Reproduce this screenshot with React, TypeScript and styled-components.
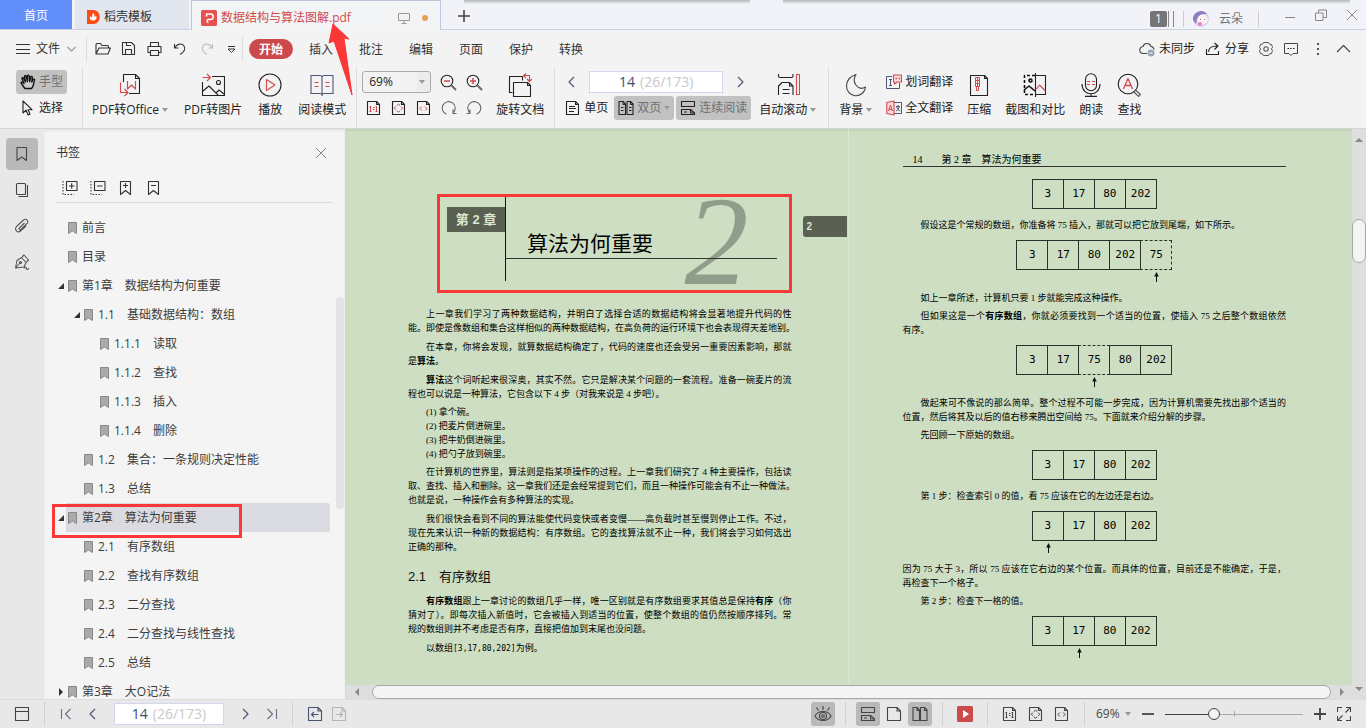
import React from "react";
import styled, { createGlobalStyle, css } from "styled-components";

const UI = `"Open Sans", "Noto Sans CJK SC", sans-serif`;
const BOOK = `"Liberation Serif", "Noto Sans CJK SC", serif`;
const RED = "#d04a4c";
const MARK = "#fb3838";
const PAPER = "#cddec2";

const Global = createGlobalStyle`
  * { box-sizing: border-box; }
  body { margin: 0; font: 12px/16px ${UI}; color: #333; background: #f3f3f3; }
  button, input, select { font: inherit; color: inherit; margin: 0; padding: 0; border: 0; background: none; }
  h1, h2, p, ol, ul, figure { margin: 0; padding: 0; font-weight: 400; }
  ol, ul { list-style: none; }
`;

/* ---------- shell ---------- */
const Shell = styled.div`
  position: relative;
  display: flex;
  flex-direction: column;
  height: 100vh;
  overflow: hidden;
`;
const Svg = styled.svg`
  display: block;
  flex: none;
  fill: none;
  stroke: currentColor;
  stroke-width: 1.1;
  stroke-linejoin: round;
`;
type IconProps = { w?: number; h?: number; children: React.ReactNode };
const Icon = ({ w = 16, h = 16, children }: IconProps) => (
  <Svg width={w} height={h} viewBox={`0 0 ${w} ${h}`} aria-hidden="true">{children}</Svg>
);
const Caret = () => (
  <Icon w={6} h={4}><path d="M0 0h6L3 4z" fill="#999" stroke="none" /></Icon>
);

/* ---------- tab bar ---------- */
const TabBar = styled.header`
  position: relative;
  display: flex;
  flex: none;
  height: 30px;
  background: #f1f3f8;
  border-bottom: 1px solid #ccd2e4;
`;
const WindowShade = styled.div<{ $left: number; $right: number }>`
  position: absolute;
  top: 0;
  left: ${p => p.$left}px;
  right: ${p => p.$right}px;
  height: 4px;
  background: linear-gradient(#b4b6ba, #f1f3f8);
`;
const HomeTab = styled.button`
  width: 72px;
  height: 29px;
  padding-top: 2px;
  background: #628ffa;
  color: #fff;
`;
const TemplateTab = styled.button`
  display: flex;
  align-items: center;
  gap: 4px;
  width: 114px;
  height: 29px;
  margin: 0 3px;
  padding: 4px 0 0 11px;
  background: #e2e6ef;
`;
const FileTab = styled.button`
  display: flex;
  align-items: center;
  width: 250px;
  height: 30px;
  margin-left: -1px;
  padding: 4px 12px 0 9px;
  background: #f3f4f5;
  border: 1px solid #bec7dd;
  border-bottom: 0;
  color: ${RED};
`;
const FileName = styled.span`
  margin: 0 auto 0 4px;
`;
const Unsaved = styled.span`
  width: 6px;
  height: 6px;
  margin-left: 12px;
  border-radius: 50%;
  background: #e6a057;
`;
const Plain = styled.button`
  display: flex;
  align-items: center;
  justify-content: center;
`;
const NewTab = styled(Plain)`
  width: 46px;
  padding-top: 3px;
`;
const WindowArea = styled.div`
  display: flex;
  align-items: center;
  margin-left: auto;
  padding: 8px 8px 0 0;
  color: #777;
`;
const Count = styled.span`
  display: flex;
  align-items: center;
  gap: 1px;
  padding-right: 9px;
  border-right: 1px solid #ccc;
  &::after {
    content: "";
    width: 4px;
    height: 16px;
    border: solid #888;
    border-width: 0 1px;
  }
`;
const CountBox = styled.b`
  width: 17px;
  height: 16px;
  border-radius: 2px;
  background: #757575;
  color: #fff;
  font-weight: 400;
  text-align: center;
`;
const User = styled.button`
  display: flex;
  align-items: center;
  gap: 10px;
  padding: 0 15px 0 9px;
  border-right: 1px solid #ccc;
`;
const WinButtons = styled.div`
  display: flex;
  gap: 19px;
  padding-left: 25px;
  margin-top: -8px;
  color: #888;
`;

/* ---------- menu bar ---------- */
const MenuBar = styled.nav`
  display: flex;
  flex: none;
  align-items: center;
  height: 38px;
  padding: 0 15px 0 16px;
`;
const FileMenu = styled.button`
  display: flex;
  align-items: center;
  gap: 6px;
`;
const QuickBar = styled.div`
  display: flex;
  align-items: center;
  gap: 10px;
  height: 24px;
  margin-left: 9px;
  padding: 0 3px 0 8px;
  border: solid #ddd;
  border-width: 0 1px;
`;
const MenuTab = styled.button<{ $on?: boolean }>`
  width: 44px;
  height: 20px;
  margin: 0 3px;
  padding-top: 1px;
  border-radius: 10px;
  ${p => p.$on && css`
    background: #cd4a4c;
    color: #fff;
    font-weight: 700;
  `}
`;
const MenuRight = styled.div`
  display: flex;
  align-items: center;
  gap: 10px;
  margin-left: auto;
  color: #222;
`;
const IconText = styled.button`
  display: flex;
  align-items: center;
  gap: 4px;
`;

/* ---------- ribbon ---------- */
const Ribbon = styled.div`
  display: flex;
  flex: none;
  height: 61px;
  background: #f3f3f3;
  border-bottom: 1px solid #d4d6d3;
  color: #222;
`;
const Group = styled.div<{ $gap: number; $pad?: string }>`
  display: flex;
  gap: ${p => p.$gap}px;
  padding: ${p => p.$pad ?? "0 10px"};
  & + & { border-left: 1px solid #ddd; }
`;
const Rows = styled.div`
  display: flex;
  flex-direction: column;
  gap: 2px;
  padding-top: 2px;
`;
const Row = styled.div<{ $gap?: number; $pad?: string }>`
  display: flex;
  align-items: center;
  height: 24px;
  gap: ${p => p.$gap ?? 0}px;
  padding: ${p => p.$pad ?? "0"};
`;
const SmallTool = styled.button<{ $on?: boolean }>`
  display: flex;
  align-items: center;
  gap: 3px;
  height: 24px;
  padding: 0 4px;
  border-radius: 3px;
  white-space: nowrap;
  ${p => p.$on && css`
    background: #c1c1c1;
    color: #707070;
    svg { color: #222; }
  `}
`;
const BigTool = styled.button`
  display: flex;
  flex-direction: column;
  align-items: center;
  gap: 5px;
  padding-top: 5px;
  height: 52px;
  white-space: nowrap;
`;
const ToolLabel = styled.span`
  display: flex;
  align-items: center;
  gap: 3px;
`;
const SideTools = styled.div`
  display: flex;
  gap: 14px;
`;
const SelectWrap = styled.label<{ $boxed?: boolean }>`
  display: flex;
  align-items: center;
  gap: 4px;
  select { appearance: none; outline: 0; width: 25px; }
  ${p => p.$boxed && css`
    width: 69px;
    height: 22px;
    padding: 0 5px 0 6px;
    border: 1px solid #aaa;
    border-radius: 3px;
    box-shadow: inset -13px 0 #ececec;
    select { flex: 1; }
  `}
`;
const PageBox = styled.label<{ $w: number }>`
  display: flex;
  align-items: center;
  justify-content: center;
  gap: 4px;
  width: ${p => p.$w}px;
  height: 22px;
  background: #fff;
  border: 1px solid #d0d8ea;
  color: #c8c8c8;
  font-size: 14px;
  input { width: 17px; color: #3c4a70; outline: 0; }
`;
const PageInput = ({ w }: { w: number }) => (
  <PageBox $w={w}>
    <input defaultValue="14" aria-label="页码" />
    <span>(26/173)</span>
  </PageBox>
);
const ZoomSelect = ({ boxed }: { boxed?: boolean }) => (
  <SelectWrap $boxed={boxed}>
    <select aria-label="缩放比例" defaultValue="69%"><option>69%</option><option>100%</option></select>
    <Caret />
  </SelectWrap>
);

/* ---------- body ---------- */
const Body = styled.div`
  display: flex;
  flex: 1;
  min-height: 0;
`;
const Rail = styled.nav`
  display: flex;
  flex: none;
  flex-direction: column;
  gap: 4px;
  width: 44px;
  padding: 9px 6px;
  background: #e8e8e8;
  color: #444;
`;
const RailButton = styled(Plain)<{ $on?: boolean }>`
  width: 32px;
  height: 32px;
  border-radius: 4px;
  background: ${p => (p.$on ? "#b9b9b9" : "transparent")};
`;
const Panel = styled.aside`
  display: flex;
  flex: none;
  flex-direction: column;
  width: 302px;
  background: #f4f4f4;
  border-right: 1px solid #d4d6dc;
  box-shadow: inset 0 2px 2px #e4e4e4;
`;
const PanelHead = styled.div`
  display: flex;
  align-items: center;
  justify-content: space-between;
  height: 48px;
  padding: 0 18px 0 12px;
`;
const PanelTools = styled.div`
  display: flex;
  align-items: center;
  gap: 12px;
  height: 26px;
  margin: 0 12px;
  padding: 0 0 4px 6px;
  border-bottom: 1px solid #dcdcdc;
`;
const TreeArea = styled.div`
  display: flex;
  flex: 1;
  min-height: 0;
  padding-top: 10px;
  overflow: hidden;
`;
const Tree = styled.ul`
  flex: 1;
`;
const TreeScroll = styled.div`
  width: 8px;
  height: 212px;
  margin: 84px 1px 0 6px;
  border-radius: 4px;
  background: #e2e3e7;
`;
const TreeRow = styled.li<{ $level: number; $on?: boolean }>`
  position: relative;
  display: flex;
  align-items: center;
  height: 29px;
  padding-left: ${p => 14 + p.$level * 16}px;
  background: ${p => (p.$on ? "linear-gradient(to right, transparent 22px, #dadbe0 22px)" : "none")};
  border-radius: 2px;
`;
const Twist = styled.span`
  width: 10px;
`;
const TreeLink = styled.a`
  display: flex;
  align-items: center;
  gap: 5px;
  color: #3c3c3c;
  text-decoration: none;
  white-space: pre;
`;
const RowMark = styled.div`
  position: absolute;
  top: 1px;
  left: 8px;
  width: 190px;
  height: 34px;
  border: 3px solid ${MARK};
`;

/* ---------- document ---------- */
const Doc = styled.main`
  display: flex;
  flex: 1;
  flex-direction: column;
  min-width: 0;
`;
const Spread = styled.div`
  display: flex;
  flex: 1;
  min-height: 0;
  padding-right: 4px;
  overflow: hidden;
  background: ${PAPER};
  box-shadow: inset 0 2px 1px #c3d3b8;
  color: #000;
  font: 9px/14px ${BOOK};
`;
const Page = styled.article<{ $pad: string; $gap: number }>`
  position: relative;
  display: flex;
  flex: 1 1 0;
  flex-direction: column;
  min-width: 0;
  padding: ${p => p.$pad};
  --gap: ${p => p.$gap}px;
  & + & { border-left: 1px solid #d9e6d0; }
`;
const Para = styled.p<{ $flush?: boolean }>`
  margin-top: var(--gap);
  text-indent: ${p => (p.$flush ? 0 : 18)}px;
`;
const Line = styled.span<{ $full: boolean }>`
  display: block;
  white-space: nowrap;
  text-align: justify;
  text-align-last: ${p => (p.$full ? "justify" : "left")};
  & + & { text-indent: 0; }
`;
const Text = ({ lines, flush }: { lines: React.ReactNode[]; flush?: boolean }) => (
  <Para $flush={flush}>
    {lines.map((l, i) => <Line key={i} $full={i < lines.length - 1}>{l}</Line>)}
  </Para>
);
const Steps = styled.ol`
  margin: 4px 0 -1px;
  padding-left: 18px;
`;
const Code = styled.code`
  font: 8px/12px "DejaVu Sans Mono", monospace;
`;
const ChapterHead = styled.header`
  position: relative;
  display: flex;
  align-items: flex-start;
  flex: none;
  height: 98px;
  margin: 0 0 9px 29px;
  padding: 0 15px 0 10px;
`;
const ChapterNo = styled.span`
  width: 58px;
  height: 25px;
  margin-top: 12px;
  background: #5a6153;
  color: #dbe8d2;
  font: 700 13px/25px "Liberation Sans", "Noto Sans CJK SC", sans-serif;
  text-align: center;
`;
const ChapterRule = styled.div`
  position: relative;
  flex: 1;
  height: 86px;
  border-left: 1px solid #111;
`;
const ChapterTitle = styled.h1`
  padding: 31px 0 0 21px;
  border-bottom: 1px solid #333;
  color: #000;
  font: 21px/32px "Noto Sans CJK SC", sans-serif;
`;
const BigDigit = styled.span`
  position: absolute;
  top: -18px;
  right: 43px;
  color: #909d8a;
  font: italic 128px/128px "Liberation Serif", serif;
`;
const HeadMark = styled.div`
  position: absolute;
  inset: -1px 0 0;
  border: 3px solid ${MARK};
`;
const SideTab = styled.span`
  position: absolute;
  top: 87px;
  right: 1px;
  width: 44px;
  height: 21px;
  padding-left: 4px;
  border-radius: 3px 0 0 3px;
  background: #5a6153;
  color: #dbe8d2;
  font: 700 10px/22px "Liberation Sans", sans-serif;
`;
const Section = styled.h2`
  margin: 13px 0 2px;
  color: #111;
  font: 13px/20px "Liberation Sans", "Noto Sans CJK SC", sans-serif;
  white-space: pre;
`;
const RunningHead = styled.header`
  display: flex;
  margin-bottom: 4px;
  padding-left: 10px;
  border-bottom: 1px solid #333;
  font-size: 10px;
  line-height: 12px;
  white-space: pre;
`;
const FolioNo = styled.span`
  width: 29px;
`;
const Figure = styled.figure`
  align-self: center;
  margin: 8px 0 5px;
`;
const Cells = styled.div`
  display: flex;
  padding-left: 1px;
`;
const Cell = styled.span<{ $open?: boolean }>`
  width: 32px;
  height: 30px;
  margin-left: -1px;
  border: 1px ${p => (p.$open ? "dashed" : "solid")} #2c302a;
  font: 11px/28px "DejaVu Sans Mono", monospace;
  text-align: center;
`;
const Pointer = styled.div<{ $at: number }>`
  margin-top: 2px;
  padding-left: ${p => p.$at * 31 + 12}px;
`;
const ArrayFigure = ({ items, open, at }: { items: number[]; open?: number; at?: number }) => (
  <Figure>
    <Cells>{items.map((n, i) => <Cell key={i} $open={i === open}>{n}</Cell>)}</Cells>
    {at !== undefined && (
      <Pointer $at={at}>
        <Icon w={8} h={10}><path d="M4.500 2v8" stroke="#111" strokeWidth="1" /><path d="M4.500 0l2.300 4.500H2.200z" fill="#111" stroke="none" /></Icon>
      </Pointer>
    )}
  </Figure>
);

/* ---------- scroll bars ---------- */
const HScroll = styled.div`
  display: flex;
  flex: none;
  align-items: center;
  height: 14px;
  padding: 0 7px 0 8px;
  gap: 8px;
  background: #dedede;
`;
const HThumb = styled.div`
  flex: 1;
  height: 14px;
  margin-left: 4px;
  border: 1px solid #a8a8a8;
  border-radius: 7px;
  background: #f4f4f4;
`;
const VScroll = styled.div`
  display: flex;
  flex: none;
  flex-direction: column;
  align-items: center;
  width: 14px;
  padding: 9px 0 8px;
  background: #dedede;
`;
const VThumb = styled.div`
  width: 14px;
  height: 44px;
  margin: 77px 0 auto;
  border: 1px solid #a8a8a8;
  border-radius: 7px;
  background: #f4f4f4;
`;

/* ---------- status bar ---------- */
const Status = styled.footer`
  display: flex;
  flex: none;
  align-items: center;
  height: 29px;
  background: #e8e8e8;
  border-top: 1px solid #dcdcdc;
  color: #444;
`;
const Cluster = styled.div<{ $gap: number; $pad?: string }>`
  display: flex;
  align-items: center;
  height: 24px;
  gap: ${p => p.$gap}px;
  padding: ${p => p.$pad ?? "0 10px"};
  & + & { border-left: 1px solid #d2d2d2; }
`;
const StatusRight = styled.div`
  display: flex;
  margin-left: auto;
`;
const StatusButton = styled(Plain)<{ $on?: boolean }>`
  width: 24px;
  height: 24px;
  border-radius: 3px;
  background: ${p => (p.$on ? "#b9b9b9" : "transparent")};
`;
const SliderWrap = styled.div`
  position: relative;
  display: flex;
  width: 138px;
  &::after {
    content: "";
    position: absolute;
    left: 50%;
    top: 5px;
    width: 1px;
    height: 6px;
    background: #aaa;
  }
`;
const Slider = styled.input`
  appearance: none;
  width: 100%;
  height: 16px;
  &::-webkit-slider-runnable-track {
    height: 1px;
    background: linear-gradient(to right, #444 35%, #aaa 35%);
  }
  &::-webkit-slider-thumb {
    appearance: none;
    width: 12px;
    height: 12px;
    margin-top: -6px;
    border: 1px solid #444;
    border-radius: 50%;
    background: #f4f4f4;
  }
`;
const Callout = styled.svg`
  position: absolute;
  top: 24px;
  left: 328px;
  pointer-events: none;
`;

/* ---------- shared drawings ---------- */
const sheet = "M1.500 1.500h9l3 3v10h-12zM10.500 1.500v3h3";
const DoubleSheet = () => (
  <Icon><path d="M1 1.500h4l2.500 2.500v10.500H1zM9 1.500h3.500L15 4v10.500H9z" /><path d="M5 1.500v3h2.500M12.500 1.500v3H15M3 7.500h2.500M3 10.500h2.500M11 7.500h2.500M11 10.500h2.500" strokeWidth="1" /></Icon>
);
const FlowSheets = () => (
  <Icon><path d="M1.500 1.500v5h13v-5zM1.500 14.500v-5h9l4 3.500v1.500zM10.500 9.500v3.500h4" /><path d="M4 12h3" strokeWidth="1" /></Icon>
);
const ActualSize = ({ c }: { c?: string }) => (
  <Icon><path d={sheet} /><path d="M4.500 6v5M10.500 6v5M3.500 6.500h1M9.500 6.500h1M3.500 11.500h2M9.500 11.500h2M7 7.500h1.500M7 9.500h1.500" stroke={c} strokeWidth="1" /></Icon>
);
const FitPage = ({ c }: { c?: string }) => (
  <Icon><path d={sheet} /><path d="M5.800 5.500L7.500 4.300l1.700 1.200M5.800 10.900l1.700 1.200 1.700-1.200M4.700 6.600L3.400 8.200l1.300 1.600M10.300 6.600l1.300 1.600-1.300 1.600" stroke={c} strokeWidth="1" /></Icon>
);
const FitWidth = ({ c }: { c?: string }) => (
  <Icon><path d={sheet} /><path d="M5.800 6.500L4 8.500l1.800 2M9.200 6.500l1.800 2-1.800 2" stroke={c} strokeWidth="1" /></Icon>
);
const Chevron = ({ left }: { left?: boolean }) => (
  <Icon w={12} h={14}><path d={left ? "M8 2L3 7l5 5" : "M4 2l5 5-5 5"} stroke="#475373" /></Icon>
);

const tree: { level: number; text: string; twist?: "open" | "shut"; on?: boolean }[] = [
  { level: 0, text: "前言" },
  { level: 0, text: "目录" },
  { level: 0, text: "第1章　数据结构为何重要", twist: "open" },
  { level: 1, text: "1.1　基础数据结构：数组", twist: "open" },
  { level: 2, text: "1.1.1　读取" },
  { level: 2, text: "1.1.2　查找" },
  { level: 2, text: "1.1.3　插入" },
  { level: 2, text: "1.1.4　删除" },
  { level: 1, text: "1.2　集合：一条规则决定性能" },
  { level: 1, text: "1.3　总结" },
  { level: 0, text: "第2章　算法为何重要", twist: "open", on: true },
  { level: 1, text: "2.1　有序数组" },
  { level: 1, text: "2.2　查找有序数组" },
  { level: 1, text: "2.3　二分查找" },
  { level: 1, text: "2.4　二分查找与线性查找" },
  { level: 1, text: "2.5　总结" },
  { level: 0, text: "第3章　大O记法", twist: "shut" },
];

const TopTabs = () => (
  <TabBar>
    <WindowShade $left={464} $right={616} />
    <WindowShade $left={783} $right={16} />
    <HomeTab>首页</HomeTab>
    <TemplateTab>
      <Icon w={14}>
        <path d="M1 1h6c9 0 9 14 0 14H1z" fill="#fb4b16" stroke="none" />
        <path d="M7 4c2.500 2 1 3.500 2 4l1-1.500c1.500 3-.5 5-3 5S2.500 9 4.500 7c.5 1 .5 1.500 1 1.500C6.500 7 6 5.500 7 4z" fill="#fff" stroke="none" />
      </Icon>
      稻壳模板
    </TemplateTab>
    <FileTab>
      <Icon>
        <rect width="16" height="16" rx="1.500" fill="#e8504f" stroke="none" />
        <path d="M5.500 6.500V4h4a2.700 2.700 0 0 1 0 5.400H7.500a1.500 1.500 0 1 0 0 3" stroke="#fff" strokeWidth="1.500" />
      </Icon>
      <FileName>数据结构与算法图解.pdf</FileName>
      <Icon w={12} h={12}><path d="M.5 1.500h11v7H.500zM6 8.500v3M3.500 11.500h5" stroke="#999" strokeWidth="1" /></Icon>
      <Unsaved />
    </FileTab>
    <NewTab aria-label="新建标签"><Icon w={12} h={12}><path d="M6 0v12M0 6h12" stroke="#444" strokeWidth="1.600" /></Icon></NewTab>
    <WindowArea>
      <Count><CountBox>1</CountBox></Count>
      <User>
        <Icon>
          <circle cx="8" cy="8" r="8" fill="#dcd3ee" stroke="none" />
          <path d="M0 9A8 8 0 0 1 14 3C9 3 4 4 3 13z" fill="#8d7cc0" stroke="none" />
          <circle cx="9.500" cy="8.500" r="5" fill="#fdf6f3" stroke="none" />
          <path d="M7 8.500h1M11 8.500h1" stroke="#87729c" />
          <circle cx="7" cy="13" r="2" fill="#e87ccc" stroke="none" />
        </Icon>
        云朵
      </User>
      <WinButtons>
        <Plain aria-label="最小化"><Icon w={12} h={12}><path d="M1 8.500h10" strokeWidth="1" /></Icon></Plain>
        <Plain aria-label="还原"><Icon w={12} h={12}><path d="M.5 4h7.500v7.500H.500zM3.500 4V1h8v7.500H8" strokeWidth="1" /></Icon></Plain>
        <Plain aria-label="关闭"><Icon w={12} h={12}><path d="M1 1l10 10M11 1L1 11" strokeWidth="1" /></Icon></Plain>
      </WinButtons>
    </WindowArea>
  </TabBar>
);

const Menu = () => (
  <MenuBar>
    <FileMenu>
      <Icon w={14} h={12}><path d="M0 1.500h14M0 6.500h14M0 10.500h14" strokeWidth="1" /></Icon>
      文件
      <Icon w={11} h={8}><path d="M1.500 2l4 4 4-4" stroke="#999" /></Icon>
    </FileMenu>
    <QuickBar>
      <Plain aria-label="打开"><Icon><path d="M1 13V3.500q0-1 1-1h3.500L7 4.500h5.500q1 0 1 1V7M1 13L4 7h11.500L13 13z" /></Icon></Plain>
      <Plain aria-label="保存"><Icon><path d="M1.500 1.500h9l3 3v9h-12zM4.500 13.500v-5h6v5M5.500 1.500v3H10" /></Icon></Plain>
      <Plain aria-label="打印"><Icon><path d="M3.500 5.500v-4h8v4M3.500 11.500h-2.500v-6h13v6h-2.500M3.500 9.500h8v5h-8z" /></Icon></Plain>
      <Plain aria-label="撤销"><Icon><path d="M1.500 3v4h4M2 6.500C4 2.500 9 2 11 5s0 6-4 8.500" /></Icon></Plain>
      <Plain aria-label="重做"><Icon><path d="M13.500 3v4h-4M13 6.500C11 2.500 6 2 4 5s0 6 4 8.500" stroke="#bbb" /></Icon></Plain>
      <Plain aria-label="更多"><Icon w={14}><path d="M3 5.500h7M3 8l3.500 3.500L10 8z" strokeWidth="1" /></Icon></Plain>
    </QuickBar>
    <Row $pad="0 0 0 3px">
      {["开始", "插入", "批注", "编辑", "页面", "保护", "转换"].map((t, i) => <MenuTab key={t} $on={i === 0}>{t}</MenuTab>)}
    </Row>
    <MenuRight>
      <IconText>
        <Icon><path d="M8 12.500H4.500a3.500 3.500 0 0 1-.5-7C5 1.500 11 1.500 12 5.500a3.500 3.500 0 0 1 3 3" stroke="#444" /><circle cx="12" cy="12" r="3.500" fill="#97a2ba" stroke="none" /><path d="M10.500 12h3" stroke="#fff" /></Icon>
        未同步
      </IconText>
      <IconText>
        <Icon><path d="M1.500 8v5.500h12V10M3.500 11c0-4 3-6 8.500-6M9.500 2L13 5l-3.500 3.500" /></Icon>
        分享
      </IconText>
      <Plain aria-label="设置"><Icon w={14}><path d="M4.500 1.500h5l1 1.700 2 .2 1 3.100L12.300 8l1.200 1.500-1 3.100-2 .2-1 1.700h-5l-1-1.700-2-.2-1-3.100L1.700 8 .500 6.500l1-3.100 2-.2z" stroke="#555" strokeWidth="1" /><circle cx="7" cy="8" r="2.200" stroke="#555" /></Icon></Plain>
      <Plain aria-label="评论"><Icon><path d="M1.500 2.500h13v10H10L8 14.500l-2-2H1.500z" stroke="#444" strokeWidth="1" /><path d="M4.500 7.500h1.500M7.200 7.500h1.500M10 7.500h1.500" /></Icon></Plain>
      <Plain aria-label="更多"><Icon><path d="M8 2h2v2H8zM8 7h2v2H8zM8 12h2v2H8z" fill="#555" stroke="none" /></Icon></Plain>
      <Plain aria-label="收起"><Icon><path d="M2 11l6.500-6.500L15 11" stroke="#444" /></Icon></Plain>
    </MenuRight>
  </MenuBar>
);

const Big = ({ label, caret, children }: { label: string; caret?: boolean; children: React.ReactNode }) => (
  <BigTool>
    <Icon w={24} h={24}>{children}</Icon>
    <ToolLabel>{label}{caret && <Caret />}</ToolLabel>
  </BigTool>
);

const Tools = () => (
  <Ribbon>
    <Group $gap={0} $pad="0 15px 0 16px">
      <Rows>
        <SmallTool $on>
          <Icon><path d="M5 14.500C3 12 1.500 10 1 8.500c1-1 2 0 3 1L2 4.500c0-1.200 1.300-1.200 1.700 0L5.500 8 4.500 2.500C4.700 1.200 6 1.300 6.300 2.500L7.500 7.500 7.500 2c.3-1.200 1.600-1 1.700 0l.5 5.500 1-4.500c.6-1 1.700-.6 1.600.5L11.800 8l1.200-2.500c.8-.8 1.800-.2 1.500.8C13.500 9 14 12 11.500 14.500z" fill="#ccc" stroke="#111" strokeWidth="1.400" /></Icon>
          手型
        </SmallTool>
        <SmallTool>
          <Icon><path d="M3 1v12l3-2.800L8 15l2-.8-2-4.500h4z" /></Icon>
          选择
        </SmallTool>
      </Rows>
    </Group>
    <Group $gap={16} $pad="0 10px 0 9px">
      <Big label="PDF转Office" caret>
        <path d="M5.500 9V1.500h12l4 4v15H11M17.500 1.500v4h4" /><path d="M9.500 8v8l4-4 4 4V8M2.500 9.500v10h7M6.500 16l3.500 3.500L6.500 23" stroke={RED} />
      </Big>
      <Big label="PDF转图片">
        <path d="M1.500 9v13.500h22v-19H11M2 18l6-5 9 9M15 20l3-3 5 4" /><circle cx="17.500" cy="9.500" r="2" /><path d="M1.500 4.500H9M6 1l3.500 3.500L6 8" stroke={RED} />
      </Big>
      <Big label="播放">
        <circle cx="12" cy="12" r="11" /><path d="M8.500 6.500v11l8.500-5.500z" stroke={RED} />
      </Big>
      <Big label="阅读模式">
        <path d="M1 2.500h9q2 0 2 2 0-2 2-2h9v18h-9q-2 0-2 2 0-2-2-2H1zM12 4.500v17" stroke="#4c5878" /><path d="M4.500 9.500h4M4.500 13.500h4M15.500 9.500h4M15.500 13.500h4" stroke={RED} />
      </Big>
    </Group>
    <Group $gap={13} $pad="0 10px 0 5px">
      <Rows>
        <Row $gap={9}>
          <ZoomSelect boxed />
          <Plain aria-label="缩小"><Icon w={17} h={17}><circle cx="7" cy="7" r="5.800" /><path d="M11.500 11.500l4.500 4.500" stroke="#666" strokeWidth="2" /><path d="M4 7h6" stroke={RED} strokeWidth="1.500" /></Icon></Plain>
          <Plain aria-label="放大"><Icon w={17} h={17}><circle cx="7" cy="7" r="5.800" /><path d="M11.500 11.500l4.500 4.500" stroke="#666" strokeWidth="2" /><path d="M4 7h6M7 4v6" stroke={RED} strokeWidth="1.500" /></Icon></Plain>
        </Row>
        <Row $gap={9} $pad="0 0 0 4px">
          <Plain aria-label="实际大小"><ActualSize c={RED} /></Plain>
          <Plain aria-label="适合页面"><FitPage c={RED} /></Plain>
          <Plain aria-label="适合宽度"><FitWidth c={RED} /></Plain>
          <Plain aria-label="顺时针旋转"><Icon><path d="M5.500 14.200A6.500 6.500 0 1 1 12 13M12 9.500V13.500h3.500" stroke="#666" /></Icon></Plain>
          <Plain aria-label="逆时针旋转"><Icon><path d="M10.500 14.200A6.500 6.500 0 1 0 4 13M4 9.500V13.500H.500" stroke="#666" /></Icon></Plain>
        </Row>
      </Rows>
      <Big label="旋转文档">
        <path d="M4.500 19.500h-3v-16h13v4" /><path d="M5.500 9.500h14l3 3v11h-17zM19.500 9.500v3h3" /><path d="M16 2.500h5.500V8M18 .5L15.500 2.500 18 5M19 6l2.500 2.500L24 6" stroke={RED} />
      </Big>
    </Group>
    <Group $gap={8} $pad="0 12px 0 6px">
      <Rows>
        <Row $gap={11} $pad="0 0 0 5px">
          <Plain aria-label="上一页"><Chevron left /></Plain>
          <PageInput w={134} />
          <Plain aria-label="下一页"><Chevron /></Plain>
        </Row>
        <Row $gap={2}>
          <SmallTool><Icon><path d={sheet} /><path d="M4 6.500h6M4 8.500h7M4 11.500h5" strokeWidth="1" /></Icon>单页</SmallTool>
          <SmallTool $on><DoubleSheet />双页<Caret /></SmallTool>
          <SmallTool $on><FlowSheets />连续阅读</SmallTool>
        </Row>
      </Rows>
      <Big label="自动滚动" caret>
        <path d="M2.500 1v2q0 1.500 1.500 1.500h11.500q1.500 0 1.500-1.500V1M2.500 22v-9l3.500-3.500h7.500l3.500 3.500v9M13.500 9.500v3.500H17M6.500 16.500h7M6.500 20.500h7" /><path d="M20.500 1.500h3v20h-3z" stroke={RED} />
      </Big>
    </Group>
    <Group $gap={10}>
      <Big label="背景" caret>
        <path d="M12 1.500C7 3 2.500 7 2.500 12.500a9.500 9.500 0 0 0 19 1.500C14 18.500 7 9 12 1.500z" stroke="#444" />
      </Big>
      <Rows>
        <SmallTool>
          <Icon><path d="M6 2.500H.500v12h13V9M3 5.500h3M4.500 5.500v6M3 11.500h3" stroke="#4c5878" strokeWidth="1" /><path d="M7.500 1h8v7H11L8.500 10V8h-1z" stroke={RED} fill="#fbdcdc" /><path d="M9.500 4.500h1.500M12.500 4.500h1.500" stroke={RED} strokeWidth="1.500" /></Icon>
          划词翻译
        </SmallTool>
        <SmallTool>
          <Icon><path d="M8 2.500h7.500v11H8M10 6.500h4M12 5v1.500M10 11c2-1 3-2.500 3.200-4.500M10.800 7c.5 2 1.500 3 3.400 4" stroke="#4c5878" strokeWidth="1" /><path d="M.8 2.500L8 1v14L.8 13.500z" stroke={RED} fill="#fbdcdc" /><path d="M2.500 11l2-6 2 6M3 9.500h3" stroke={RED} strokeWidth="1" /></Icon>
          全文翻译
        </SmallTool>
      </Rows>
      <SideTools>
        <Big label="压缩">
          <path d="M3.500 2.500h14l3 3v17h-17zM17.500 2.500v3h3" /><path d="M8.500 4.500h4v9h-4zM10.500 4.500v9M8.500 7.500h4M8.500 10.500h4M9.500 13.500v4h2v-4" stroke={RED} strokeWidth="1" />
        </Big>
        <Big label="截图和对比">
          <path d="M12 2.500H1.500v19H12" strokeWidth="1.600" strokeDasharray="3 2" stroke="#111" /><path d="M12.500 0v24M12 2.500h10.500v19H12" /><path d="M1 17l5-4 6 5M9 7.500a1.500 1.500 0 1 0 0 .1" stroke="#111" strokeWidth="1.600" /><path d="M12.500 17l4-5 6 6" stroke={RED} />
        </Big>
        <Big label="朗读">
          <rect x="6.500" y=".8" width="11" height="17" rx="5.500" /><path d="M3 11c0 13 18 13 18 0M12 21v2.500M6 23.400h12" /><path d="M8 8.500h3M13 8.500h3M8 11.500h3M13 11.500h3" stroke={RED} />
        </Big>
        <Big label="查找">
          <circle cx="11" cy="11" r="9.800" /><path d="M18.500 17l5 4.500-1.800 2L17 19" stroke="#555" /><path d="M6.500 16L11 5.500 15.500 16M8 12.500h6" stroke={RED} strokeWidth="1.300" />
        </Big>
      </SideTools>
    </Group>
  </Ribbon>
);

const Bookmarks = () => (
  <Panel>
    <PanelHead>
      <span>书签</span>
      <Plain aria-label="关闭书签"><Icon w={12} h={12}><path d="M1 1l10 10M11 1L1 11" stroke="#888" strokeWidth="1" /></Icon></Plain>
    </PanelHead>
    <PanelTools>
      <Plain aria-label="全部展开"><Icon><path d="M4.500 1.500h10.500v9H4.500zM7 6h5.500M9.700 3.300v5.400" /><path d="M1 1v13.500h11" strokeDasharray="1.500 1.500" /></Icon></Plain>
      <Plain aria-label="全部折叠"><Icon><path d="M4.500 1.500h10.500v9H4.500zM7 6h5.500" /><path d="M1 1v13.500h11" strokeDasharray="1.500 1.500" /></Icon></Plain>
      <Plain aria-label="添加书签"><Icon><path d="M2.500 1.500h10v13l-5-4-5 4zM5 5.500h5M7.500 3v5" /></Icon></Plain>
      <Plain aria-label="删除书签"><Icon><path d="M2.500 1.500h10v13l-5-4-5 4zM5 5.500h5" /></Icon></Plain>
    </PanelTools>
    <TreeArea>
      <Tree>
        {tree.map(r => (
          <TreeRow key={r.text} $level={r.level} $on={r.on}>
            <Twist>
              {r.twist && <Icon w={8} h={8}><path d={r.twist === "open" ? "M6 1v6H0z" : "M1 0v8l4-4z"} fill="#333" stroke="none" /></Icon>}
            </Twist>
            <TreeLink href="#">
              <Icon w={9} h={12}><path d="M.5.5h8v11l-4-2.500-4 2.500z" fill="#aaa" stroke="#888" strokeWidth="1" /></Icon>
              {r.text}
            </TreeLink>
            {r.on && <RowMark />}
          </TreeRow>
        ))}
      </Tree>
      <TreeScroll />
    </TreeArea>
  </Panel>
);

const LeftPage = () => (
  <Page $pad="66px 56px 0 62px" $gap={5}>
    <ChapterHead>
      <BigDigit>2</BigDigit>
      <ChapterNo>第 2 章</ChapterNo>
      <ChapterRule><ChapterTitle>算法为何重要</ChapterTitle></ChapterRule>
      <HeadMark />
    </ChapterHead>
    <SideTab>2</SideTab>
    <Text lines={["上一章我们学习了两种数据结构，并明白了选择合适的数据结构将会显著地提升代码的性", "能。即使是像数组和集合这样相似的两种数据结构，在高负荷的运行环境下也会表现得天差地别。"]} />
    <Text lines={["在本章，你将会发现，就算数据结构确定了，代码的速度也还会受另一重要因素影响，那就", <>是<b>算法</b>。</>]} />
    <Text lines={[<><b>算法</b>这个词听起来很深奥，其实不然。它只是解决某个问题的一套流程。准备一碗麦片的流</>, "程也可以说是一种算法，它包含以下 4 步（对我来说是 4 步吧）。"]} />
    <Steps>
      <li>(1) 拿个碗。</li>
      <li>(2) 把麦片倒进碗里。</li>
      <li>(3) 把牛奶倒进碗里。</li>
      <li>(4) 把勺子放到碗里。</li>
    </Steps>
    <Text lines={["在计算机的世界里，算法则是指某项操作的过程。上一章我们研究了 4 种主要操作，包括读", "取、查找、插入和删除。这一章我们还是会经常提到它们，而且一种操作可能会有不止一种做法。", "也就是说，一种操作会有多种算法的实现。"]} />
    <Text lines={["我们很快会看到不同的算法能使代码变快或者变慢——高负载时甚至慢到停止工作。不过，", "现在先来认识一种新的数据结构：有序数组。它的查找算法就不止一种，我们将会学习如何选出", "正确的那种。"]} />
    <Section>2.1　有序数组</Section>
    <Text lines={[<><b>有序数组</b>跟上一章讨论的数组几乎一样，唯一区别就是有序数组要求其值总是保持<b>有序</b>（你</>, "猜对了）。即每次插入新值时，它会被插入到适当的位置，使整个数组的值仍然按顺序排列。常", "规的数组则并不考虑是否有序，直接把值加到末尾也没问题。"]} />
    <Text lines={[<>以数组<Code>[3,17,80,202]</Code>为例。</>]} />
  </Page>
);

const RightPage = () => (
  <Page $pad="25px 62px 0 54px" $gap={4}>
    <RunningHead><FolioNo>14</FolioNo>第 2 章　算法为何重要</RunningHead>
    <ArrayFigure items={[3, 17, 80, 202]} />
    <Text lines={["假设这是个常规的数组，你准备将 75 插入，那就可以把它放到尾端，如下所示。"]} />
    <ArrayFigure items={[3, 17, 80, 202, 75]} open={4} at={4} />
    <Text lines={["如上一章所述，计算机只要 1 步就能完成这种操作。"]} />
    <Text lines={[<>但如果这是一个<b>有序数组</b>，你就必须要找到一个适当的位置，使插入 75 之后整个数组依然</>, "有序。"]} />
    <ArrayFigure items={[3, 17, 75, 80, 202]} open={2} at={2} />
    <Text lines={["做起来可不像说的那么简单。整个过程不可能一步完成，因为计算机需要先找出那个适当的", "位置，然后将其及以后的值右移来腾出空间给 75。下面就来介绍分解的步骤。"]} />
    <Text lines={["先回顾一下原始的数组。"]} />
    <ArrayFigure items={[3, 17, 80, 202]} />
    <Text lines={["第 1 步：检查索引 0 的值，看 75 应该在它的左边还是右边。"]} />
    <ArrayFigure items={[3, 17, 80, 202]} at={0} />
    <Text flush lines={["因为 75 大于 3，所以 75 应该在它右边的某个位置。而具体的位置，目前还是不能确定，于是，", "再检查下一个格子。"]} />
    <Text lines={["第 2 步：检查下一格的值。"]} />
    <ArrayFigure items={[3, 17, 80, 202]} at={1} />
  </Page>
);

const StatusBar = () => (
  <Status>
    <Cluster $gap={0} $pad="0 14px">
      <Plain aria-label="面板"><Icon><path d="M1.500 1.500h13v13h-13zM1.500 5.500h13" /></Icon></Plain>
    </Cluster>
    <Cluster $gap={15} $pad="0 14px 0 15px">
      <Plain aria-label="第一页"><Icon w={12} h={12}><path d="M1.500 1v10M10.500 1l-5 5 5 5" stroke="#6b7386" /></Icon></Plain>
      <Plain aria-label="上一页"><Chevron left /></Plain>
      <PageInput w={110} />
      <Plain aria-label="下一页"><Chevron /></Plain>
      <Plain aria-label="最后一页"><Icon w={12} h={12}><path d="M10.500 1v10M1.500 1l5 5-5 5" stroke="#6b7386" /></Icon></Plain>
    </Cluster>
    <Cluster $gap={8} $pad="0 14px">
      <Plain aria-label="后退"><Icon><path d="M1.500 1.500h9.500L14.500 5v9.500h-13zM11 1.500V5h3.500M11.500 8.500h-7M7 6L4.500 8.500 7 11" stroke="#475373" /></Icon></Plain>
      <Plain aria-label="前进"><Icon><path d="M1.500 1.500h9.500L14.500 5v9.500h-13zM11 1.500V5h3.500M4.500 8.500h7M9 6l2.500 2.500L9 11" stroke="#b5b5b5" /></Icon></Plain>
    </Cluster>
    <StatusRight>
      <Cluster $gap={0} $pad="0 10px 0 0">
        <StatusButton $on aria-label="护眼模式"><Icon w={18} h={18}><path d="M1 11c3-6 13-6 16 0-3 6-13 6-16 0z" /><circle cx="9" cy="11" r="3.500" /><circle cx="9" cy="11" r="1.300" /><path d="M9 1v4M2.500 2.500l2 3M15.500 2.500l-2 3" /></Icon></StatusButton>
      </Cluster>
      <Cluster $gap={2}>
        <StatusButton $on aria-label="连续阅读"><FlowSheets /></StatusButton>
        <StatusButton aria-label="单页"><Icon><path d="M1.500 1.500h9.500L14.500 5v9.500h-13zM11 1.500V5h3.500" /></Icon></StatusButton>
        <StatusButton $on aria-label="双页"><Icon><path d="M1 1.500h4l2.500 2.500v10.500H1zM8.500 1.500h4L15 4v10.500H8.500zM5 1.500v3h2.500M12.500 1.500v3H15" /></Icon></StatusButton>
      </Cluster>
      <Cluster $gap={2}>
        <StatusButton aria-label="播放"><Icon><rect width="16" height="16" rx="1.500" fill="#cd4a4c" stroke="none" /><path d="M6 4v8l6-4z" fill="#fff" stroke="none" /></Icon></StatusButton>
      </Cluster>
      <Cluster $gap={2}>
        <StatusButton aria-label="实际大小"><ActualSize /></StatusButton>
        <StatusButton aria-label="适合页面"><FitPage /></StatusButton>
        <StatusButton aria-label="适合宽度"><FitWidth /></StatusButton>
      </Cluster>
      <Cluster $gap={11} $pad="0 15px 0 11px">
        <ZoomSelect />
        <Plain aria-label="缩小"><Icon w={12} h={12}><path d="M0 6h12" strokeWidth="1.800" /></Icon></Plain>
        <SliderWrap><Slider type="range" min={0} max={100} defaultValue={34} aria-label="缩放" /></SliderWrap>
        <Plain aria-label="放大"><Icon w={12} h={12}><path d="M0 6h12M6 0v12" strokeWidth="1.800" /></Icon></Plain>
        <Plain aria-label="全屏"><Icon w={14} h={14}><path d="M.5 5V.500H5M9 .5h4.500V5M13.500 9v4.500H9M5 13.500H.500V9M13.500.5L8.500 5.500M.5 13.500l5-5" /></Icon></Plain>
      </Cluster>
    </StatusRight>
  </Status>
);

export default function App() {
  return (
    <Shell>
      <Global />
      <TopTabs />
      <Menu />
      <Tools />
      <Body>
        <Rail>
          <RailButton $on aria-label="书签"><Icon><path d="M3 1.500h9.500v13L7.700 11 3 14.500z" /></Icon></RailButton>
          <RailButton aria-label="缩略图"><Icon><rect x="2.500" y="1.500" width="9" height="11" rx="1" /><path d="M13.500 3v11.500H4.500" /></Icon></RailButton>
          <RailButton aria-label="附件"><Icon><path d="M10.500 5L5.500 10c-1 1 .3 2.500 1.500 1.500l6-6c2.500-2.500-1-5.500-3.500-3.500L2.500 8.500C0 11.500 3.500 15.500 6.500 13l5.500-5" stroke="#555" /></Icon></RailButton>
          <RailButton aria-label="签名"><Icon><path d="M1.500 14l1.500-7.500L7.500 3.500l4.500 5-2 4.500zM8 3l2-2 4.500 5-2 2M1.500 14l4-4.500M10 14.500c1-2 2-2 2.500 0s1.500 1 2.500-.5" stroke="#555" /><circle cx="6.500" cy="8.500" r="1" /></Icon></RailButton>
        </Rail>
        <Bookmarks />
        <Doc>
          <Spread><LeftPage /><RightPage /></Spread>
          <HScroll>
            <Icon w={6} h={8}><path d="M5 0v8L1 4z" fill="#888" stroke="none" /></Icon>
            <HThumb />
            <Icon w={6} h={8}><path d="M1 0v8l4-4z" fill="#888" stroke="none" /></Icon>
          </HScroll>
        </Doc>
        <VScroll>
          <Icon w={8} h={4}><path d="M0 4h8L4 0z" fill="#888" stroke="none" /></Icon>
          <VThumb />
          <Icon w={8} h={4}><path d="M0 0h8L4 4z" fill="#888" stroke="none" /></Icon>
        </VScroll>
      </Body>
      <StatusBar />
      <Callout width="28" height="74" viewBox="0 0 28 74" aria-hidden="true">
        <path d="M5 0L1 19l5-2 18 54-8-57 5 1z" fill={MARK} stroke={MARK} />
      </Callout>
    </Shell>
  );
}
